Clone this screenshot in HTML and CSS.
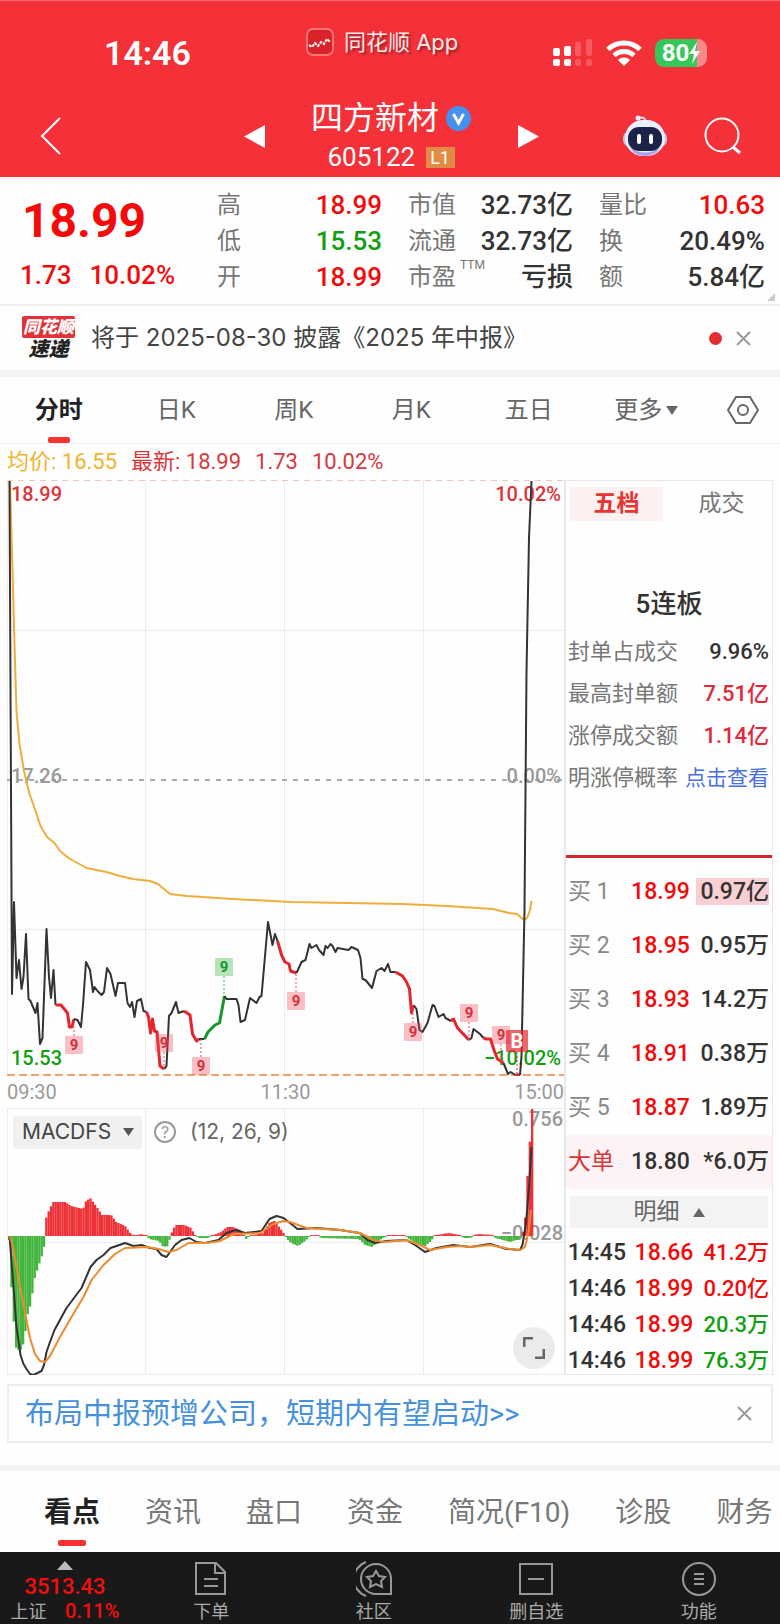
FILE: index.html
```
<!DOCTYPE html>
<html lang="zh-CN">

<head>
    <meta charset="UTF-8">
    <meta name="viewport" content="width=device-width, initial-scale=1.0">
    <title>四方新材 605122</title>
    <link rel="stylesheet" href="styles.css">
</head>

<body>

    <!-- Header -->
    <header class="header">
        <div class="status-bar">
            <span class="clock">14:46</span>
            <span class="app-name">
                <svg width="28" height="28" viewBox="0 0 28 28">
                    <rect x="1" y="1" width="26" height="26" rx="6" fill="#d9222a" stroke="#fa7473" stroke-width="2" />
                    <path d="M3 17l3 2 3-4 3 3 3-4 3 2 3-5 3 3" fill="none" stroke="#fff" stroke-width="2" stroke-dasharray="3 1" />
                </svg>
                同花顺 App
            </span>
            <span class="status-icons">
                <svg width="40" height="28" viewBox="0 0 40 28" fill="#fff">
                    <rect x="0" y="9" width="7" height="8" rx="2" />
                    <rect x="11" y="7" width="7" height="10" rx="2" />
                    <rect x="0" y="20" width="7" height="7" rx="2" />
                    <rect x="11" y="20" width="7" height="7" rx="2" />
                    <g fill="#f65a5f">
                        <rect x="22" y="3" width="6" height="14" rx="2" />
                        <rect x="33" y="0" width="6" height="17" rx="2" />
                        <rect x="22" y="20" width="6" height="7" rx="2" />
                        <rect x="33" y="20" width="6" height="7" rx="2" />
                    </g>
                </svg>
                <svg width="36" height="26" viewBox="0 0 36 26" fill="none" stroke="#fff" stroke-width="5">
                    <path d="M2 9.500a23 23 0 0 1 32 0M8 15.500a14.500 14.500 0 0 1 20 0" />
                    <path d="M18 26l-6-6a8.500 8.500 0 0 1 12 0z" fill="#fff" stroke="none" />
                </svg>
                <span class="battery">80<svg width="11" height="22" viewBox="0 0 11 22" fill="#fff"><path d="M8 0L0 12h5l-2 10 8-13H6z" /></svg></span>
            </span>
        </div>

        <nav class="title-bar">
            <button class="icon-btn back" aria-label="返回">
                <svg width="22" height="38" viewBox="0 0 22 38" fill="none" stroke="#fff" stroke-width="2"><path d="M20 1L2 19l18 18" /></svg>
            </button>
            <button class="icon-btn" aria-label="上一只">
                <svg width="21" height="23" viewBox="0 0 21 23" fill="#fff"><path d="M21 0v23L0 11.500z" /></svg>
            </button>
            <div class="stock">
                <h1>四方新材
                    <svg width="25" height="25" viewBox="0 0 25 25"><circle cx="12.500" cy="12.500" r="12.500" fill="#4690ee" /><path d="M7.500 8l5 9 5-9" fill="none" stroke="#fff" stroke-width="3" /></svg>
                </h1>
                <p>605122 <span class="level">L1</span></p>
            </div>
            <button class="icon-btn" aria-label="下一只">
                <svg width="21" height="23" viewBox="0 0 21 23" fill="#fff"><path d="M0 0v23l21-11.500z" /></svg>
            </button>
            <div class="title-actions">
                <button class="icon-btn" aria-label="智能助手">
                    <svg width="44" height="42" viewBox="0 0 44 42">
                        <path d="M15 3q8-2 8 5" fill="none" stroke="#d9dcf5" stroke-width="2" />
                        <circle cx="15" cy="3" r="2.500" fill="#eceefc" />
                        <rect x="0" y="16" width="44" height="16" rx="7" fill="#bfc4ee" />
                        <rect x="2" y="5" width="40" height="36" rx="18" fill="#eceefc" />
                        <path d="M7 33q15 9 30 0-5 8-15 8t-15-8z" fill="#a9a2ee" />
                        <rect x="5" y="12" width="34" height="24" rx="11" fill="#1d2348" />
                        <rect x="14" y="19" width="4" height="10" rx="2" fill="#fff" />
                        <rect x="26" y="19" width="4" height="10" rx="2" fill="#fff" />
                    </svg>
                </button>
                <button class="icon-btn" aria-label="搜索">
                    <svg width="38" height="38" viewBox="0 0 38 38" fill="none" stroke="#fff" stroke-width="2"><circle cx="18" cy="18" r="16.500" /><path d="M29 30l7 6" stroke-width="3" /></svg>
                </button>
            </div>
        </nav>
    </header>

    <!-- Quote -->
    <section class="quote">
        <div class="price">
            <strong>18.99</strong>
            <p><span>1.73</span><span>10.02%</span></p>
        </div>
        <dl class="stats stats-price">
            <div><dt>高</dt><dd class="up">18.99</dd></div>
            <div><dt>低</dt><dd class="down">15.53</dd></div>
            <div><dt>开</dt><dd class="up">18.99</dd></div>
        </dl>
        <dl class="stats stats-value">
            <div><dt>市值</dt><dd>32.73亿</dd></div>
            <div><dt>流通</dt><dd>32.73亿</dd></div>
            <div><dt>市盈<sup>TTM</sup></dt><dd>亏损</dd></div>
        </dl>
        <dl class="stats stats-volume">
            <div><dt>量比</dt><dd class="up">10.63</dd></div>
            <div><dt>换</dt><dd>20.49%</dd></div>
            <div><dt>额</dt><dd>5.84亿</dd></div>
        </dl>
    </section>

    <section class="news">
        <span class="news-logo"><b>同花顺</b><i>速递</i></span>
        <a href="#report">将于 2025-08-30 披露《2025 年中报》</a>
        <span class="dot"></span>
        <button class="icon-btn" aria-label="关闭">
            <svg width="15" height="15" viewBox="0 0 15 15" stroke="#999" stroke-width="2"><path d="M1 1l13 13M14 1L1 14" /></svg>
        </button>
    </section>

    <!-- Period tabs -->
    <nav class="periods">
        <button class="active">分时</button>
        <button>日K</button>
        <button>周K</button>
        <button>月K</button>
        <button>五日</button>
        <button>更多<svg width="12" height="9" viewBox="0 0 12 9" fill="#666"><path d="M0 0h12L6 9z" /></svg></button>
        <button class="settings" aria-label="设置">
            <svg width="32" height="28" viewBox="0 0 32 28" fill="none" stroke="#666" stroke-width="2"><path d="M9 1h14l8 13-8 13H9L1 14z" /><circle cx="16" cy="14" r="5" /></svg>
        </button>
    </nav>

    <p class="legend"><span class="avg">均价: 16.55</span><span>最新: 18.99</span><span>1.73</span><span>10.02%</span></p>

    <main class="board">
        <div class="charts">
            <!-- Intraday price -->
            <svg class="chart" viewBox="7 480 557 596">
                <g class="grid">
                    <path d="M7.500 480v596M145.500 480v596M284.500 480v596M423.500 480v596M7 630.500h557M7 929.500h557" />
                    <path class="limit-top" d="M7 480.500h557" />
                    <path class="middle" d="M7 780h557" />
                    <path class="limit-low" d="M7 1075h557" />
                </g>
                <g class="labels">
                    <text class="red" x="11" y="501">18.99</text>
                    <text class="red end" x="561" y="501">10.02%</text>
                    <text x="11" y="783">17.26</text>
                    <text class="end" x="561" y="783">0.00%</text>
                    <text class="green" x="11" y="1065">15.53</text>
                    <text class="green end" x="561" y="1065">−10.02%</text>
                </g>
                <path class="line average" d="M10 481L12 554 14.500 645 16.500 712 19.500 744 24 771 29.500 794 33.500 805 40.500 826 47 837 54.500 843 60 851 68.500 858 86.500 868 106.500 872 120 876 133 879 150 881 158 884 164 889 170 894 187 896 233 899 290 902 403 904 447 906 493 909 509 913 517 914 524 920 527 918 530 910 531.500 901" />
                <g class="line">
                    <path d="M9.500 481L12 994 14 902 16.500 978 19 960 21.500 989 23.500 977 26 934 28.500 999 30.500 1001 35.500 1013 37.500 1003 40 1044 42.500 1038 46.500 929 49 977 51 998 53.500 970 55.500 1005" />
                    <path class="fall" d="M55.500 1005H61L67.500 1013 69.500 1027H72L74 1019" />
                    <path d="M74 1019L77.500 1020 81 1027 83 1005 86 962 90 970 93 992 94.500 987 97.500 991 101.500 995 104 992 107 968 110.500 974 115.500 996 118 983 125 983 127.500 1003 130 1007 132 1002 134.500 1017 137 1001 141 999 143.500 1011 146.500 1012" />
                    <path class="fall" d="M146.500 1012L148.500 1017 150.500 1033 152.500 1019 154.500 1031 157 1032 160 1066 164 1069" />
                    <path d="M164 1069L166.500 1066 169 1016 171.500 1013 176 1002 178.500 1013 184 1011" />
                    <path class="fall" d="M184 1011L190 1015 192.500 1034 196.500 1041 199 1039" />
                    <path d="M199 1039H204.500" />
                    <path class="rise" d="M204.500 1039L208 1032 215 1025 219.500 1023 224.500 996" />
                    <path d="M224.500 996L226.500 999H236.500L238.500 1005 240.500 1022 245 1020 250 998 256.500 1003 259.500 997 261.500 996 268 922 272.500 945 275 934 277.500 941" />
                    <path class="fall" d="M277.500 941L281.500 955 285 962 289 964 290.500 971 296.500 973" />
                    <path d="M296.500 973L301.500 962 305.500 960 309.500 944 311.500 948 316.500 945 319 950 323.500 955 325.500 946 327.500 948 330.500 944 332.500 946 335.500 952 337.500 948 348.500 950 351.500 947 358 950 360.500 958 362.500 979 365.500 980 372 988 376.500 971 381.500 968 384.500 971 388 964 390.500 972 395.500 972" />
                    <path class="fall" d="M395.500 972L402.500 976 406.500 982 409.500 989 411.500 1013 413.500 1005" />
                    <path d="M413.500 1005L416.500 1009 419.500 1030 422.500 1032 427.500 1023 432.500 1005 434.500 1006 438.500 1017 443.500 1014 445.500 1018 451 1021" />
                    <path class="fall" d="M451 1021L453.500 1019 457.500 1028 469 1040" />
                    <path d="M469 1040L471.500 1038 473.500 1029 480 1034 483.500 1038" />
                    <path class="fall" d="M483.500 1038L486.500 1039H490.500L494 1050 497.500 1059 503.500 1063" />
                    <path d="M503.500 1063L508 1074 510.500 1072 515.500 1075" />
                    <path class="fall" d="M515.500 1075H520" />
                    <path d="M520 1075L521.500 1056 524.500 910 526.500 672 529 538 531.500 481" />
                </g>
                <g id="markers"></g>
            </svg>

            <div class="times"><span>09:30</span><span>11:30</span><span>15:00</span></div>

            <!-- MACD -->
            <div class="macd">
                <svg class="chart" viewBox="7 1108 557 267">
                    <g class="grid">
                        <path d="M7 1108.500h557M7 1374.500h557M7.500 1108v267M145.500 1108v267M284.500 1108v267M423.500 1108v267M7 1242.500h557" />
                    </g>
                    <g class="labels">
                        <text class="end" x="563" y="1126">0.756</text>
                        <text class="end" x="563" y="1240">−0.028</text>
                    </g>
                    <g id="bars"></g>
                    <path class="line" d="M9.500 1236L13.500 1287 16.500 1327 20.500 1355 23.500 1364 26.500 1369 30 1374 33.500 1375 37.500 1373 41.500 1371 44 1365 46.500 1352 50 1342 54.500 1330 66.500 1308 81.500 1288 90.500 1267 96.500 1260 103.500 1255 110.500 1248 116.500 1246 125 1243 133.500 1246 141.500 1245 150 1248 156.500 1249 161.500 1255 166.500 1257 170 1252 175 1245 181.500 1240 189.500 1238 196.500 1242 205 1243 218.500 1240 226.500 1233 236 1230 245 1233 261.500 1231 269.500 1219 276.500 1216 283.500 1218 290 1223 297.500 1229 316.500 1228 340 1230 359.500 1233 367.500 1240 375 1243 386.500 1241 406.500 1240 416.500 1246 425 1252 436.500 1248 453.500 1245 470 1247 490 1244 506.500 1249 520 1250 522.500 1245 526 1223 529 1187 531.500 1147" />
                    <path class="line dea" d="M9.500 1236L12 1243 17.500 1273 25 1313 30 1338 35 1354 40 1361 45 1362 50 1356 60 1337 71.500 1317 83.500 1297 91.500 1280 103.500 1265 115 1254 125 1248 146.500 1247 158.500 1249 168.500 1252 176.500 1250 188.500 1243 206.500 1243 220 1241 233.500 1234 260 1233 273.500 1224 283.500 1221 290 1222 306.500 1228 340 1230 360 1233 373.500 1240 383.500 1242 406.500 1240 420 1245 430 1250 446.500 1247 460 1246 470 1247 490 1245 510 1249 520.500 1250 525 1247 528.500 1233 531 1210" />
                </svg>
                <div class="indicator">
                    <button class="picker">MACDFS<svg width="11" height="8" viewBox="0 0 11 8" fill="#555"><path d="M0 0h11L5.500 8z" /></svg></button>
                    <button class="help" aria-label="说明">?</button>
                    <span>(12, 26, 9)</span>
                </div>
                <button class="expand" aria-label="全屏">
                    <svg width="22" height="22" viewBox="0 0 22 22" fill="none" stroke="#666" stroke-width="3"><path d="M1 10V1h9M21 12v9h-9" /></svg>
                </button>
            </div>
        </div>

        <!-- Order book -->
        <aside class="orders">
            <div class="order-tabs">
                <button class="active">五档</button>
                <button>成交</button>
            </div>
            <h2>5连板</h2>
            <dl class="limit-info">
                <div><dt>封单占成交</dt><dd>9.96%</dd></div>
                <div><dt>最高封单额</dt><dd class="crimson">7.51亿</dd></div>
                <div><dt>涨停成交额</dt><dd class="crimson">1.14亿</dd></div>
                <div><dt>明涨停概率</dt><dd><a href="#chance">点击查看</a></dd></div>
            </dl>
            <table class="bids">
                <tr><th>买 1</th><td class="up">18.99</td><td><mark>0.97亿</mark></td></tr>
                <tr><th>买 2</th><td class="up">18.95</td><td>0.95万</td></tr>
                <tr><th>买 3</th><td class="up">18.93</td><td>14.2万</td></tr>
                <tr><th>买 4</th><td class="up">18.91</td><td>0.38万</td></tr>
                <tr><th>买 5</th><td class="up">18.87</td><td>1.89万</td></tr>
                <tr class="big"><th>大单</th><td>18.80</td><td>*6.0万</td></tr>
            </table>
            <button class="detail">明细<svg width="12" height="9" viewBox="0 0 12 9" fill="#666"><path d="M0 9h12L6 0z" /></svg></button>
            <table class="ticks">
                <tr><td>14:45</td><td class="up">18.66</td><td class="up">41.2万</td></tr>
                <tr><td>14:46</td><td class="up">18.99</td><td class="up">0.20亿</td></tr>
                <tr><td>14:46</td><td class="up">18.99</td><td class="down">20.3万</td></tr>
                <tr><td>14:46</td><td class="up">18.99</td><td class="down">76.3万</td></tr>
            </table>
        </aside>
    </main>

    <section class="promo">
        <a href="#promo">布局中报预增公司，短期内有望启动&gt;&gt;</a>
        <button class="icon-btn" aria-label="关闭">
            <svg width="15" height="15" viewBox="0 0 15 15" stroke="#999" stroke-width="2"><path d="M1 1l13 13M14 1L1 14" /></svg>
        </button>
    </section>

    <!-- Content tabs -->
    <nav class="sections">
        <button class="active">看点</button>
        <button>资讯</button>
        <button>盘口</button>
        <button>资金</button>
        <button>简况(F10)</button>
        <button>诊股</button>
        <button>财务</button>
    </nav>

    <footer class="toolbar">
        <a class="index" href="#index">
            <svg width="16" height="9" viewBox="0 0 16 9" fill="#bbb"><path d="M0 9h16L8 0z" /></svg>
            <strong>3513.43</strong>
            <span>上证 <b>0.11%</b></span>
        </a>
        <button>
            <svg width="36" height="36" viewBox="0 0 36 36"><path d="M3 2h20l9 9v22H3zM22 2v10h10M11 18h14M11 25h14" /></svg>
            下单
        </button>
        <button>
            <svg width="36" height="36" viewBox="0 0 36 36"><path d="M10 1a18 18 0 0 0 0 34M35 33H20a15 15 0 1 1 15-15z" /><path d="M20 10l3 5 6 1-4 4 1 6-6-3-6 3 1-6-4-4 6-1z" /></svg>
            社区
        </button>
        <button>
            <svg width="36" height="36" viewBox="0 0 36 36"><path d="M2 3h32v30H2zM10 18h16" /></svg>
            删自选
        </button>
        <button>
            <svg width="36" height="36" viewBox="0 0 36 36"><circle cx="18" cy="18" r="16" /><path d="M13 13h10M13 18h10M13 23h10" /></svg>
            功能
        </button>
    </footer>

    <script src="script.js"></script>
</body>

</html>
```
FILE: styles.css
```
* {
    box-sizing: border-box;
}

body {
    margin: 0;
    background: #fefefe;
    color: #333;
    font-family: Roboto, "Noto Sans CJK SC", sans-serif;
    font-size: 24px;
    line-height: 36px;
    overflow-x: hidden;
}

h1,
h2,
p,
dl,
dd {
    margin: 0;
}

a {
    color: inherit;
    text-decoration: none;
}

button {
    padding: 0;
    border: 0;
    background: none;
    color: inherit;
    font: inherit;
    cursor: pointer;
}

svg {
    flex: none;
}

table {
    width: 100%;
    border-collapse: collapse;
}

.icon-btn {
    display: flex;
}

.up {
    color: #f40a0a;
}

.down {
    color: #12a012;
}

/* Header */
.header {
    height: 177px;
    background: #f43038;
    color: #fff;
    border-top: 1px solid #f8696d;
}

.status-bar {
    display: grid;
    grid-template-columns: 202px auto 1fr;
    align-items: center;
    height: 94px;
    padding: 10px 73px 0 104px;
}

.clock {
    font-size: 34px;
    font-weight: 600;
}

.app-name {
    display: flex;
    align-items: center;
    gap: 10px;
    margin-bottom: 22px;
    font-family: Inter, "Noto Sans CJK SC", sans-serif;
    font-size: 22px;
    color: #ffe9e8;
    text-shadow: 2px 2px 2px #9c2529;
}

.status-icons {
    display: flex;
    align-items: center;
    justify-content: flex-end;
    gap: 13px;
}

.battery {
    display: flex;
    align-items: center;
    justify-content: center;
    width: 52px;
    height: 28px;
    border-radius: 9px;
    background: linear-gradient(90deg, #34c759 80%, #f9898b 80%);
    font-size: 24px;
    font-weight: 700;
}

.title-bar {
    display: grid;
    grid-template-columns: 1fr 21px 253px 21px 1fr;
    align-items: center;
    height: 82px;
    padding: 0 38px 0 40px;
}

.stock {
    text-align: center;
}

.stock h1 {
    display: flex;
    align-items: center;
    justify-content: center;
    gap: 7px;
    font-size: 32px;
    font-weight: 400;
    line-height: 42px;
}

.stock p {
    font-size: 26px;
    line-height: 36px;
}

.level {
    display: inline-block;
    width: 29px;
    margin-left: 4px;
    background: #e38b45;
    font-size: 18px;
    line-height: 21px;
    vertical-align: 2px;
}

.title-actions {
    display: flex;
    align-items: center;
    justify-content: flex-end;
    gap: 37px;
}

/* Quote */
.quote {
    position: relative;
    display: flex;
    height: 129px;
    padding: 8px 15px 0 20px;
    border-bottom: 2px solid #f1f1f1;
    color: #333;
}

.quote::after {
    content: "";
    position: absolute;
    right: 5px;
    bottom: 3px;
    border: 4px solid;
    border-color: transparent #ccc #ccc transparent;
}

.price {
    flex: 0 0 197px;
    color: #f40a0a;
    font-size: 26px;
    font-weight: 500;
}

.price strong {
    display: block;
    padding-left: 2px;
    font-size: 48px;
    font-weight: 700;
    line-height: 72px;
}

.price span {
    margin-right: 18px;
}

.stats {
    margin-top: 2px;
}

.stats div {
    display: flex;
    justify-content: space-between;
}

.stats dt {
    color: #777;
}

.stats dd {
    font-size: 26px;
    font-weight: 500;
}

.stats-price {
    flex: 165;
    margin-right: 26px;
}

.stats-value {
    flex: 165;
    margin-right: 26px;
}

.stats-volume {
    flex: 166;
}

sup {
    margin-left: 4px;
    font-size: 12px;
    line-height: 12px;
    vertical-align: 16px;
}

.news {
    display: flex;
    align-items: center;
    height: 64px;
    padding: 0 29px 0 22px;
}

.news a {
    flex: 1;
    margin-left: 16px;
    color: #444;
    font-family: Inter, "Noto Sans CJK SC", sans-serif;
}

.news-logo {
    width: 53px;
    font-size: 18px;
    font-style: italic;
    font-weight: 900;
    line-height: 22px;
    text-align: center;
}

.news-logo b {
    display: block;
    border-radius: 2px;
    background: #e13238;
    color: #fff;
    font-size: 17px;
}

.news-logo i {
    color: #222;
    font-size: 20px;
}

.dot {
    width: 13px;
    height: 13px;
    margin-right: 14px;
    border-radius: 50%;
    background: #e32d30;
}

/* Period tabs */
.periods {
    display: grid;
    grid-template-columns: repeat(6, 1fr) 75px;
    height: 74px;
    border-top: 7px solid #f4f4f4;
    border-bottom: 1px solid #eee;
    color: #666;
}

.periods button {
    position: relative;
    display: flex;
    align-items: center;
    justify-content: center;
    gap: 4px;
}

.periods .active,
.sections .active {
    color: #222;
    font-weight: 700;
}

.periods .active::after,
.sections .active::after {
    content: "";
    position: absolute;
    bottom: 0;
    left: 50%;
    width: 22px;
    height: 6px;
    margin-left: -11px;
    border-radius: 2px;
    background: #f5322f;
}

.legend {
    display: flex;
    gap: 14px;
    padding-left: 7px;
    color: #d6393d;
    font-size: 22px;
}

.legend .avg {
    color: #efb52c;
}

/* Board */
.board {
    display: grid;
    grid-template-columns: 1fr 209px;
    margin: 0 7px;
}

.chart {
    display: block;
    width: 100%;
}

.grid {
    fill: none;
    stroke: #ececec;
}

.limit-top {
    stroke: #ebc8bb;
    stroke-dasharray: 6 5;
}

.middle {
    stroke: #aaa;
    stroke-width: 2;
    stroke-dasharray: 5 6;
}

.limit-low {
    stroke: #f2a56b;
    stroke-width: 2;
    stroke-dasharray: 8 4;
}

.labels {
    fill: #999;
    font-size: 20px;
    font-weight: 500;
}

.labels .red {
    fill: #dc3438;
}

.labels .green {
    fill: #12a012;
}

.labels .end {
    text-anchor: end;
}

.line {
    fill: none;
    stroke: #333;
    stroke-width: 2;
    stroke-linejoin: round;
}

.average {
    stroke: #f0ad3c;
}

.dea {
    stroke: #ef8a2c;
}

.fall {
    stroke: #e5252d;
    stroke-width: 3;
}

.rise {
    stroke: #12992a;
    stroke-width: 3;
}

.marker {
    font-size: 15px;
    font-weight: 700;
    text-anchor: middle;
}

.marker .buy {
    font-size: 20px;
}

.marker path {
    stroke-dasharray: 2 2;
}

.times {
    display: flex;
    justify-content: space-between;
    height: 32px;
    color: #999;
    font-size: 20px;
    line-height: 32px;
}

.macd {
    position: relative;
}

.indicator {
    position: absolute;
    top: 6px;
    left: 6px;
    display: flex;
    align-items: center;
    color: #666;
    font-family: Inter, sans-serif;
    font-size: 21px;
}

.picker {
    display: flex;
    align-items: center;
    justify-content: space-between;
    width: 129px;
    height: 33px;
    padding: 0 8px 0 9px;
    border-radius: 3px;
    background: #f0f0f0;
    color: #444;
}

.help {
    width: 22px;
    height: 22px;
    margin: 0 14px 0 12px;
    border: 2px solid #999;
    border-radius: 50%;
    color: #999;
    font-size: 16px;
    line-height: 18px;
}

.expand {
    position: absolute;
    right: 9px;
    bottom: 6px;
    display: flex;
    align-items: center;
    justify-content: center;
    width: 42px;
    height: 42px;
    border-radius: 50%;
    background: #ebebeb;
}

/* Order book */
.orders {
    border: 1px solid #e8e8e8;
    border-left: 2px solid #e8e8e8;
    font-size: 23px;
}

.order-tabs {
    display: grid;
    grid-template-columns: 1fr 1fr;
    gap: 12px;
    margin: 6px 4px 65px;
    color: #777;
}

.order-tabs button {
    height: 34px;
    line-height: 34px;
}

.order-tabs .active {
    border-radius: 2px;
    background: #fdf0f0;
    color: #e83532;
    font-weight: 700;
}

.orders h2 {
    margin-bottom: 9px;
    font-size: 26px;
    font-weight: 500;
    line-height: 36px;
    text-align: center;
}

.limit-info {
    padding: 0 3px 56px 2px;
    border-bottom: 3px solid #d3262d;
    font-size: 22px;
}

.limit-info div {
    display: flex;
    justify-content: space-between;
    line-height: 42px;
}

.limit-info dt {
    color: #777;
}

.limit-info dd {
    font-weight: 500;
}

.limit-info .crimson {
    color: #e3283c;
}

.limit-info a {
    color: #4a70dc;
    font-size: 21px;
    font-weight: 400;
}

.bids {
    margin: 7px 0;
}

.bids th,
.bids td,
.ticks td {
    padding: 0;
    font-weight: 500;
    text-align: right;
    white-space: nowrap;
}

.bids tr {
    height: 54px;
}

.bids th {
    width: 60px;
    padding-left: 2px;
    color: #888;
    font-weight: 400;
    text-align: left;
}

.bids td:last-child,
.ticks td:last-child {
    padding-right: 3px;
}

.bids mark {
    padding-left: 4px;
    background: #f8cfd3;
    color: inherit;
    line-height: 26px;
}

.bids .big {
    background: #fdf3f4;
}

.bids .big th {
    color: #d8353a;
}

.detail {
    display: flex;
    align-items: center;
    justify-content: center;
    gap: 13px;
    width: calc(100% - 8px);
    height: 32px;
    margin: 0 4px 7px;
    background: #f3f3f3;
    color: #666;
}

.ticks {
    margin-bottom: -5px;
}

.ticks tr {
    height: 36px;
}

.ticks td:first-child {
    width: 60px;
}

.ticks td:last-child {
    font-size: 22px;
}

.promo {
    display: flex;
    align-items: center;
    justify-content: space-between;
    height: 59px;
    margin: 9px 7px 22px;
    padding: 0 19px 0 16px;
    border: 2px solid #ececec;
    color: #4591dc;
    font-size: 29px;
}

/* Content tabs */
.sections {
    display: flex;
    gap: 45px;
    height: 87px;
    padding: 8px 0 6px 44px;
    border-top: 6px solid #f3f3f3;
    color: #777;
    font-size: 28px;
    white-space: nowrap;
}

.sections button {
    position: relative;
    flex: none;
}

.sections .active::after {
    width: 28px;
    margin-left: -14px;
}

/* Toolbar */
.toolbar {
    display: grid;
    grid-template-columns: 130px repeat(4, 1fr);
    height: 72px;
    overflow: hidden;
    background: #191919;
    color: #aaa;
    font-size: 18px;
    line-height: 22px;
}

.toolbar button,
.index {
    display: flex;
    flex-direction: column;
    align-items: center;
    padding-top: 9px;
}

.toolbar button svg {
    margin-bottom: 4px;
    fill: none;
    stroke: #999;
    stroke-width: 2;
}

.index strong {
    margin-top: 4px;
    color: #f40d0d;
    font-size: 22px;
    font-weight: 500;
    line-height: 26px;
}

.index b {
    margin-left: 14px;
    color: #f40d0d;
    font-size: 20px;
    font-weight: 500;
}
```
FILE: script.js
```
const NS = "http://www.w3.org/2000/svg";

// Signal markers: x, y of the box centre, y of the price line, type
const markers = [
    [74, 1045, 1027],
    [164, 1043, 1069],
    [201, 1066, 1039],
    [224, 967, 996, "rise"],
    [296, 1001, 973],
    [413, 1032, 1005],
    [469, 1013, 1040],
    [501, 1035, 1062],
    [517, 1041, 1074, "buy"]
];

const colors = {
    fall: ["#f04a58", "#d3303c"],
    rise: ["#35ae3c", "#12992a"],
    buy: ["#e5252d", "#ffffff"]
};

document.getElementById("markers").innerHTML = markers.map(([x, y, lineY, type = "fall"]) => {
    const [box, text] = colors[type];
    const isBuy = type === "buy";
    const r = isBuy ? 11 : 9;
    const edge = lineY > y ? y + r : y - r;
    return `<g class="marker">
        <path d="M${x} ${edge}V${lineY}" stroke="${box}" />
        <rect x="${x - r}" y="${y - r}" width="${r * 2}" height="${r * 2}" rx="1" fill="${box}" fill-opacity="${isBuy ? 0.7 : 0.35}" />
        <text class="${type}" x="${x}" y="${y + (isBuy ? 7 : 5)}" style="fill: ${text}; stroke: none">${isBuy ? "B" : "9"}</text>
    </g>`;
}).join("");

// MACD histogram: x and bar height, the bars between are interpolated
const macd = [
    [8, -4], [11, -65], [13, -90], [15, -112], [19, -115], [23, -106], [26, -80], [30, -67], [33, -44],
    [37, -31], [42, -16], [44, -4], [45, 18], [48, 26], [52, 34], [64, 34], [70, 30], [82, 27],
    [84, 34], [89, 38], [97, 27], [101, 21], [110, 21], [115, 14], [124, 10], [129, 3], [133, 0],
    [140, 2], [146, 0], [148, -3], [158, -5], [162, -11], [167, -10], [169, -1], [172, 7], [175, 11],
    [183, 11], [190, 8], [194, 0], [198, -2], [207, -2], [210, 0], [220, 4], [226, 9], [232, 9],
    [239, 6], [243, 0], [245, -3], [248, 0], [262, 3], [268, 13], [273, 15], [278, 9], [283, 2],
    [286, -3], [290, -7], [297, -10], [304, -5], [309, 0], [316, 1], [320, -2], [358, -3], [364, -9],
    [371, -11], [377, -5], [382, -2], [386, 0], [388, 1], [402, 1], [404, 0], [408, -3], [415, -8],
    [424, -10], [430, -5], [433, 0], [436, 1], [447, 3], [459, 1], [462, -2], [470, -2], [472, 0],
    [476, 2], [492, 1], [494, -2], [502, -4], [509, -6], [518, -3], [521, 0], [524, 18], [526, 55],
    [529, 99], [531, 127]
];

const bars = document.getElementById("bars");
const zero = 1236;
const step = 523 / 225;

for (let i = 0; i <= 225; i++) {
    const x = 8 + i * step;
    let n = macd.findIndex(point => point[0] >= x);
    if (n < 1) {
        n = n < 0 ? macd.length - 1 : 1;
    }
    const [x1, h1] = macd[n - 1];
    const [x2, h2] = macd[n];
    const h = h1 + (h2 - h1) * (x - x1) / (x2 - x1);
    const size = Math.max(Math.abs(h), 1);

    const bar = document.createElementNS(NS, "rect");
    bar.setAttribute("x", x);
    bar.setAttribute("y", h > 0 ? zero - size : zero);
    bar.setAttribute("width", step);
    bar.setAttribute("height", size);
    bar.setAttribute("fill", h > 0 ? "#ee3137" : "#43b53c");
    bars.appendChild(bar);
}
```
